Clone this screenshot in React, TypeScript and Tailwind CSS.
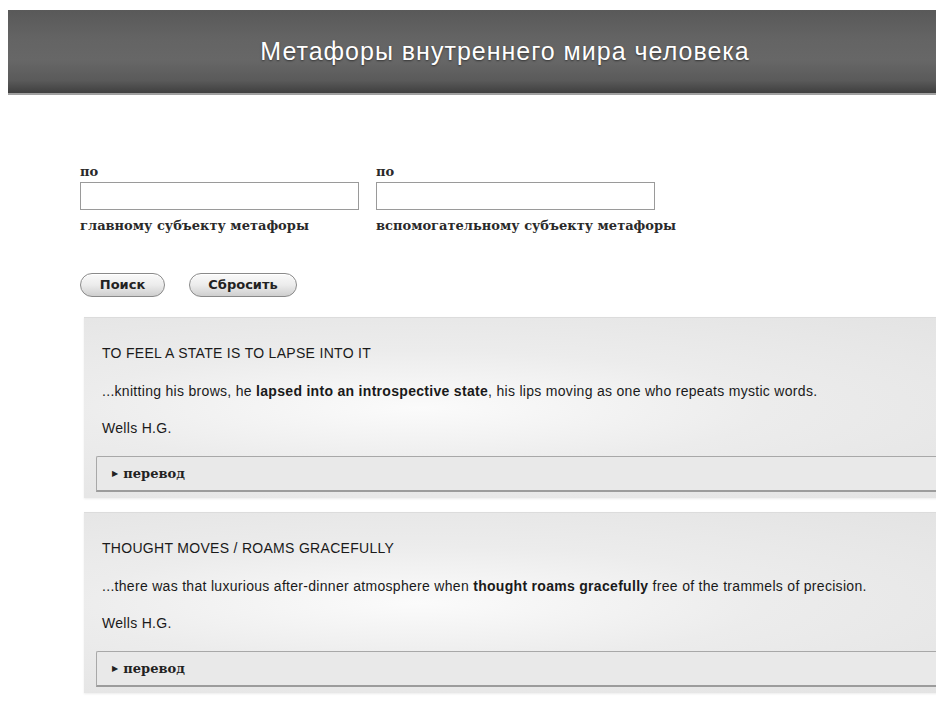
const metaphors = [
  {
    title: 'TO FEEL A STATE IS TO LAPSE INTO IT',
    before: '...knitting his brows, he ',
    bold: 'lapsed into an introspective state',
    after: ', his lips moving as one who repeats mystic words.',
    author: 'Wells H.G.',
  },
  {
    title: 'THOUGHT MOVES / ROAMS GRACEFULLY',
    before: '...there was that luxurious after-dinner atmosphere when ',
    bold: 'thought roams gracefully',
    after: ' free of the trammels of precision.',
    author: 'Wells H.G.',
  },
];

const serif = "font-['DejaVu_Serif',serif]";
const sans = "font-['Liberation_Sans',Arial,sans-serif]";

function Field({ hint }: { hint: string }) {
  return (
    <div className={`flex flex-col ${serif} text-[13px] font-bold text-[#2a2a2a]`}>
      <span className="h-[18px] leading-[18px]">по</span>
      <input
        type="text"
        className="mt-[1px] h-[28px] w-[279px] border border-[#9a9a9a] bg-white outline-none"
      />
      <span className="mt-[7px] leading-[18px]">{hint}</span>
    </div>
  );
}

function PillButton({ label, width }: { label: string; width: string }) {
  return (
    <button
      className={`${width} h-[24px] rounded-full border border-[#8a8a8a] bg-gradient-to-b from-[#fafafa] via-[#ececec] to-[#cfcfcf] font-['DejaVu_Sans',sans-serif] text-[13px] font-semibold text-[#222] shadow-[inset_0_1px_0_#fff]`}
    >
      {label}
    </button>
  );
}

export default function App() {
  return (
    <div className="relative h-[707px] w-[936px] overflow-hidden bg-white">
      {/* Title bar */}
      <div className="ml-[8px] mt-[10px] flex h-[85px] items-center border-b-2 border-[#a0a0a0] bg-[linear-gradient(to_bottom,#595959_0%,#646464_35%,#676767_60%,#5a5a5a_85%,#3f3f3f_100%)] pl-[66px]">
        <h1 className={`w-full text-center ${sans} text-[25px] tracking-[1px] text-white [text-shadow:0_1px_2px_rgba(0,0,0,0.5)]`}>
          Метафоры внутреннего мира человека
        </h1>
      </div>

      {/* Search form */}
      <div className="ml-[80px] mt-[68px] flex gap-[17px]">
        <Field hint="главному субъекту метафоры" />
        <Field hint="вспомогательному субъекту метафоры" />
      </div>

      <div className="ml-[80px] mt-[38px] flex gap-[24px]">
        <PillButton label="Поиск" width="w-[85px]" />
        <PillButton label="Сбросить" width="w-[108px]" />
      </div>

      {/* Results */}
      <div className="ml-[84px] mt-[20px] flex w-[880px] flex-col gap-[14px]">
        {metaphors.map((m) => (
          <div
            key={m.title}
            className={`h-[181px] border-t border-[#dcdcdc] bg-[radial-gradient(ellipse_at_38%_50%,#fbfbfb_0%,#ececec_45%,#e3e3e3_100%)] pt-[26px] ${sans} text-[14px] tracking-[0.3px] text-[#1a1a1a] shadow-[0_1px_2px_rgba(0,0,0,0.08)]`}
          >
            <div className="pl-[18px] leading-[18px]">{m.title}</div>
            <div className="mt-[20px] pl-[18px] leading-[18px]">
              {m.before}
              <b>{m.bold}</b>
              {m.after}
            </div>
            <div className="mt-[19px] pl-[18px] leading-[18px]">{m.author}</div>
            <div className="ml-[12px] mt-[19px] flex h-[36px] items-center rounded-tl-[2px] border-l border-t border-b-2 border-l-[#a8a8a8] border-t-[#a8a8a8] border-b-[#9c9c9c] bg-[#e9e9e9] pl-[15px]">
              <span className="mr-[5px] text-[8px] text-[#222]">▶</span>
              <span className={`${serif} text-[13px] font-bold tracking-normal text-[#222]`}>перевод</span>
            </div>
          </div>
        ))}
        <div className="h-[30px] border-t border-[#dcdcdc] bg-[#e6e6e6]" />
      </div>
    </div>
  );
}
